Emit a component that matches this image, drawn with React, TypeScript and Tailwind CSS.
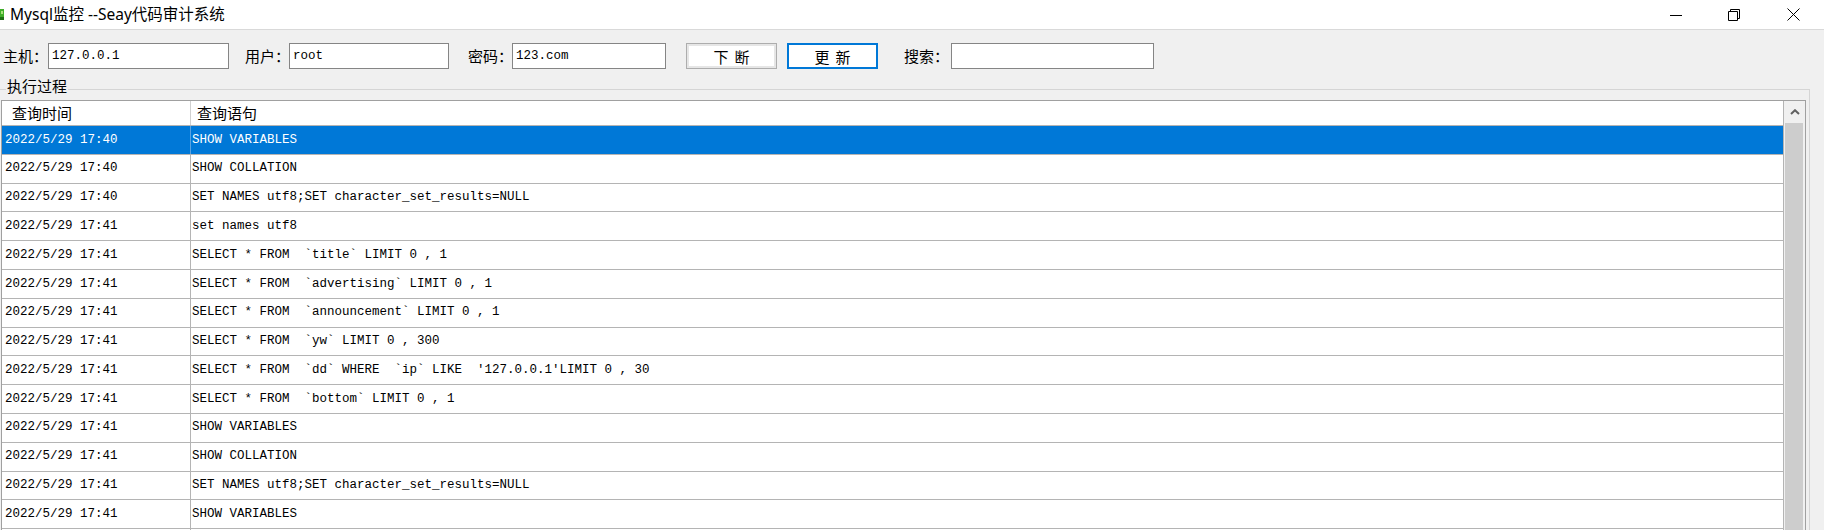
import React from "react";

const cjk = { fontFamily: '"Noto Sans CJK SC", "Noto Sans", sans-serif' };
const mono = { fontFamily: '"Liberation Mono", "Noto Sans CJK SC", monospace' };

const rows: [string, string][] = [
  ["2022/5/29 17:40", "SHOW VARIABLES"],
  ["2022/5/29 17:40", "SHOW COLLATION"],
  ["2022/5/29 17:40", "SET NAMES utf8;SET character_set_results=NULL"],
  ["2022/5/29 17:41", "set names utf8"],
  ["2022/5/29 17:41", "SELECT * FROM  `title` LIMIT 0 , 1"],
  ["2022/5/29 17:41", "SELECT * FROM  `advertising` LIMIT 0 , 1"],
  ["2022/5/29 17:41", "SELECT * FROM  `announcement` LIMIT 0 , 1"],
  ["2022/5/29 17:41", "SELECT * FROM  `yw` LIMIT 0 , 300"],
  ["2022/5/29 17:41", "SELECT * FROM  `dd` WHERE  `ip` LIKE  '127.0.0.1'LIMIT 0 , 30"],
  ["2022/5/29 17:41", "SELECT * FROM  `bottom` LIMIT 0 , 1"],
  ["2022/5/29 17:41", "SHOW VARIABLES"],
  ["2022/5/29 17:41", "SHOW COLLATION"],
  ["2022/5/29 17:41", "SET NAMES utf8;SET character_set_results=NULL"],
  ["2022/5/29 17:41", "SHOW VARIABLES"],
];

function Label({ text, w }: { text: string; w: string }) {
  return (
    <span
      className={`${w} shrink-0 whitespace-nowrap text-[15px] leading-[26px] text-black`}
      style={cjk}
    >
      {text}
    </span>
  );
}

function Field({ value, w }: { value: string; w: string }) {
  return (
    <div
      className={`${w} shrink-0 h-[26px] bg-white border border-[#858585] pl-[3px] flex items-center text-[12.5px] text-black whitespace-pre`}
      style={mono}
    >
      {value}
    </div>
  );
}

export default function App() {
  return (
    <div className="w-[1824px] h-[530px] overflow-hidden bg-[#f0f0f0] flex flex-col">
      {/* Title bar */}
      <div className="h-[30px] shrink-0 bg-white border-b border-[#d9d9d9] flex items-center">
        <svg width="6" height="14" viewBox="0 0 6 14">
          <rect x="0" y="1" width="4" height="11" fill="#3fae2a" />
          <rect x="1" y="3" width="2" height="3" fill="#a6e07a" />
          <rect x="0" y="9" width="4" height="3" fill="#1d6e14" />
        </svg>
        <span
          className="ml-[4px] text-[15.5px] text-black whitespace-nowrap"
          style={{ fontFamily: '"Noto Sans", "Noto Sans CJK SC", sans-serif' }}
        >
          Mysql监控 --Seay代码审计系统
        </span>
        <div className="flex-1" />
        <div className="w-[58px] h-full flex items-center justify-center">
          <svg width="12" height="12" viewBox="0 0 12 12">
            <path d="M0 6.5H12" stroke="#000" strokeWidth="1" />
          </svg>
        </div>
        <div className="w-[57px] h-full flex items-center justify-center">
          <svg width="12" height="12" viewBox="0 0 12 12" fill="none">
            <path d="M0.5 2.5H9.5V11.5H0.5Z" stroke="#000" strokeWidth="1" />
            <path d="M2.5 2.5V0.5H11.5V9.5H9.5" stroke="#000" strokeWidth="1" />
          </svg>
        </div>
        <div className="w-[62px] h-full flex items-center justify-center">
          <svg width="13" height="13" viewBox="0 0 13 13">
            <path d="M0.5 0.5L12.5 12.5M12.5 0.5L0.5 12.5" stroke="#000" strokeWidth="1" />
          </svg>
        </div>
      </div>

      {/* Toolbar */}
      <div className="h-[48px] shrink-0 pt-[13px] pl-[3px] flex items-start">
        <Label text="主机：" w="w-[45px]" />
        <Field value="127.0.0.1" w="w-[181px]" />
        <div className="w-[16px] shrink-0" />
        <Label text="用户：" w="w-[44px]" />
        <Field value="root" w="w-[160px]" />
        <div className="w-[19px] shrink-0" />
        <Label text="密码：" w="w-[44px]" />
        <Field value="123.com" w="w-[154px]" />
        <div className="w-[20px] shrink-0" />
        <button
          className="w-[91px] h-[26px] shrink-0 bg-white border border-[#adadad] shadow-[inset_0_0_0_2px_#e6e6e6] flex items-center justify-center gap-[6px] text-[15px] leading-none text-black"
          style={cjk}
        >
          <span>下</span>
          <span>断</span>
        </button>
        <div className="w-[10px] shrink-0" />
        <button
          className="w-[91px] h-[26px] shrink-0 bg-white border-2 border-[#0078d7] flex items-center justify-center gap-[6px] text-[15px] leading-none text-black"
          style={cjk}
        >
          <span>更</span>
          <span>新</span>
        </button>
        <div className="w-[26px] shrink-0" />
        <Label text="搜索：" w="w-[47px]" />
        <Field value="" w="w-[203px]" />
      </div>

      {/* Group box header */}
      <div className="h-[22px] shrink-0 w-[1810px] flex items-start">
        <div className="w-[6px] mt-[11px] border-t border-[#d5d5d5]" />
        <span className="text-[15px] leading-[16px] text-black px-[1px] whitespace-nowrap" style={cjk}>
          执行过程
        </span>
        <div className="flex-1 h-[11px] mt-[11px] border-t border-r border-[#d5d5d5]" />
      </div>

      {/* Group box body */}
      <div className="flex-1 w-[1810px] border-r border-[#d5d5d5] min-h-0">
        <div className="ml-[1px] w-[1805px] h-full border-t border-l border-r border-[#a0a0a0] flex">
          {/* List view */}
          <div className="flex-1 bg-white border-r border-[#b4b4b4] flex flex-col min-w-0">
            <div className="h-[25px] shrink-0 flex border-b border-[#b4b4b4] text-[15px] text-black" style={cjk}>
              <div className="w-[189px] border-r border-[#d0d0d0] pl-[10px] leading-[24px]">查询时间</div>
              <div className="flex-1 pl-[6px] leading-[24px]">查询语句</div>
            </div>
            {rows.map((r, i) => {
              const sel = i === 0;
              return (
                <div
                  key={i}
                  className={`h-[28.8px] shrink-0 flex border-b border-[#b4b4b4] text-[12.5px] whitespace-pre ${
                    sel ? "bg-[#0078d7] text-white" : "text-black"
                  }`}
                  style={mono}
                >
                  <div
                    className={`w-[189px] border-r pl-[3px] flex items-center ${
                      sel ? "border-[#5aa2e0]" : "border-[#b4b4b4]"
                    }`}
                  >
                    {r[0]}
                  </div>
                  <div className="flex-1 pl-[1px] flex items-center">{r[1]}</div>
                </div>
              );
            })}
            <div className="flex-1 flex">
              <div className="w-[189px] border-r border-[#b4b4b4]" />
            </div>
          </div>

          {/* Scrollbar */}
          <div className="w-[21px] shrink-0 bg-[#f0f0f0] flex flex-col">
            <div className="h-[22px] flex items-center justify-center">
              <svg width="10" height="6" viewBox="0 0 10 6" fill="none">
                <path d="M1 5L5 1.2L9 5" stroke="#606060" strokeWidth="2" />
              </svg>
            </div>
            <div className="flex-1 ml-[1px] mr-[2px] bg-[#cdcdcd]" />
          </div>
        </div>
      </div>
    </div>
  );
}
